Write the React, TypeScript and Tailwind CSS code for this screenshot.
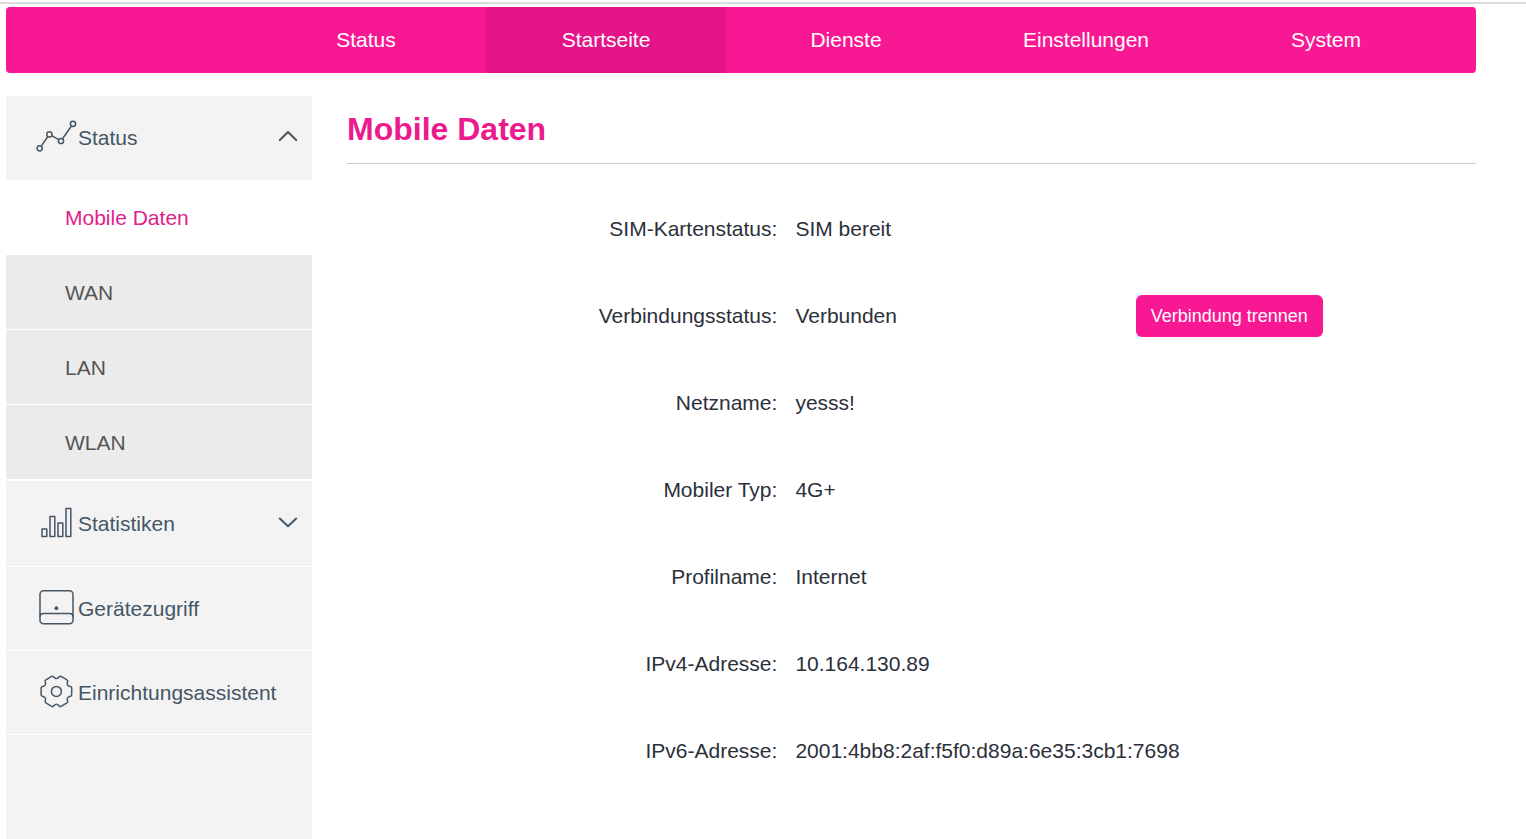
import clsx from "clsx";
import React, { useState } from "react";

const navItems = ["Status", "Startseite", "Dienste", "Einstellungen", "System"];

const statusPages = ["Mobile Daten", "WAN", "LAN", "WLAN"];

const details = [
  { label: "SIM-Kartenstatus:", value: "SIM bereit" },
  { label: "Verbindungsstatus:", value: "Verbunden", action: "Verbindung trennen" },
  { label: "Netzname:", value: "yesss!" },
  { label: "Mobiler Typ:", value: "4G+" },
  { label: "Profilname:", value: "Internet" },
  { label: "IPv4-Adresse:", value: "10.164.130.89" },
  { label: "IPv6-Adresse:", value: "2001:4bb8:2af:f5f0:d89a:6e35:3cb1:7698" },
];

const Icon: React.FC<{ children: React.ReactNode }> = ({ children }) => (
  <svg
    className="w-[41px] h-[41px] shrink-0"
    viewBox="0 0 41 41"
    fill="none"
    stroke="currentColor"
    strokeWidth="1.5"
    strokeLinejoin="round"
    aria-hidden="true"
  >
    {children}
  </svg>
);

const StatusIcon = () => (
  <Icon>
    <circle cx="3.7" cy="31.3" r="2.6" />
    <circle cx="13.4" cy="17.4" r="2.6" />
    <circle cx="25" cy="24" r="2.6" />
    <circle cx="37" cy="6.8" r="2.6" />
    <path d="M5.2 29.1l6.7-9.6M15.7 18.7l7 4M26.5 21.8L35.5 9" />
  </Icon>
);

const StatsIcon = () => (
  <Icon>
    <rect x="6" y="26" width="4.8" height="7.5" />
    <rect x="14" y="13.5" width="4.8" height="20" />
    <rect x="22" y="20" width="4.8" height="13.5" />
    <rect x="30" y="5.5" width="4.8" height="28" />
  </Icon>
);

const DeviceIcon = () => (
  <Icon>
    <rect x="4" y="2.7" width="33" height="33" rx="3.5" />
    <path d="M4 28.8Q4 25.4 7.4 25.4H33.6Q37 25.4 37 28.8" />
    <circle cx="20.4" cy="20.2" r="1.9" fill="currentColor" stroke="none" />
  </Icon>
);

const GearIcon = () => (
  <Icon>
    <g transform="translate(20.4 19.4)">
      <circle r="5" />
      {[0, 60, 120, 180, 240, 300].map((angle) => (
        <path
          key={angle}
          transform={`rotate(${angle})`}
          d="M11.1-6.4C11.8-5.2 12.6-5.2 14-4.9Q15.3-4.6 15.3-3.4V3.4Q15.3 4.6 14 4.9C12.6 5.2 11.8 5.2 11.1 6.4"
        />
      ))}
    </g>
  </Icon>
);

const Chevron: React.FC<{ open: boolean }> = ({ open }) => (
  <svg
    className="w-5 h-[21px] ml-auto"
    viewBox="0 0 20 21"
    fill="none"
    stroke="currentColor"
    strokeWidth="2"
    strokeLinecap="round"
    strokeLinejoin="round"
    aria-hidden="true"
  >
    <path d={open ? "M1.8 13L10 5L18.2 13" : "M1.8 5.5L10 13.3L18.2 5.5"} />
  </svg>
);

const sectionRow = "flex w-full items-center gap-px border-b pl-[30px] pr-[14px] cursor-pointer";

const Sidebar: React.FC = () => {
  const [statusOpen, setStatusOpen] = useState(true);
  const [statsOpen, setStatsOpen] = useState(false);

  return (
    <aside className="w-[306px] shrink-0 bg-[#f3f3f3] text-[#465664]">
      <button
        type="button"
        aria-expanded={statusOpen}
        onClick={() => setStatusOpen(!statusOpen)}
        className={clsx(sectionRow, "h-[84px] border-[#f3f3f3]")}
      >
        <StatusIcon />
        Status
        <Chevron open={statusOpen} />
      </button>
      {statusOpen && (
        <ul className="border-b border-white">
          {statusPages.map((page, i) => (
            <li key={page}>
              <a
                href="#"
                className={clsx(
                  "flex h-[75px] items-center border-b border-white pt-0.5 pl-[59px]",
                  i === 0 ? "bg-white text-[#e0218a]" : "bg-[#ebebeb] text-[#555555]"
                )}
              >
                {page}
              </a>
            </li>
          ))}
        </ul>
      )}
      <button
        type="button"
        aria-expanded={statsOpen}
        onClick={() => setStatsOpen(!statsOpen)}
        className={clsx(sectionRow, "h-[86px] border-white")}
      >
        <StatsIcon />
        Statistiken
        <Chevron open={statsOpen} />
      </button>
      <a href="#" className={clsx(sectionRow, "h-[84px] border-white")}>
        <DeviceIcon />
        Gerätezugriff
      </a>
      <a href="#" className={clsx(sectionRow, "h-[84px] border-white")}>
        <GearIcon />
        Einrichtungsassistent
      </a>
    </aside>
  );
};

const MobileData: React.FC = () => (
  <main className="flex-1 min-w-0 pl-[35px]">
    <h1 className="border-b border-[#cccccc] text-[32px] leading-[67px] font-bold text-[#ec1b8d]">
      Mobile Daten
    </h1>
    <dl className="mt-[21px] text-[#2b303a]">
      {details.map(({ label, value, action }) => (
        <div
          key={label}
          className="grid h-[87px] grid-cols-[minmax(0,430fr)_minmax(0,340fr)_minmax(0,358fr)] items-center"
        >
          <dt className="text-right">{label}</dt>
          <dd className="pl-[18px] whitespace-nowrap">{value}</dd>
          {action && (
            <dd className="pl-[18px] pt-px">
              <button
                type="button"
                className="block h-[42px] rounded-md bg-[#f91894] px-[15px] text-lg text-white cursor-pointer"
              >
                {action}
              </button>
            </dd>
          )}
        </div>
      ))}
    </dl>
  </main>
);

export default function App() {
  return (
    <div className="min-h-screen flex flex-col bg-white pt-[2px] font-['Liberation_Sans',Arial,sans-serif] text-[21px] leading-6">
      <div className="h-[2px] bg-[#dcdcdc]" />
      <div className="flex flex-1 flex-col pt-[3px] pl-[6px] pr-[50px]">
        <nav className="flex h-[66px] rounded bg-[#f91894] pl-[240px] pr-[30px] text-white">
          {navItems.map((item) => (
            <a
              key={item}
              href="#"
              className={clsx(
                "flex flex-1 items-center justify-center",
                item === "Startseite" && "bg-[#e51488]"
              )}
            >
              {item}
            </a>
          ))}
        </nav>
        <div className="mt-[23px] flex flex-1">
          <Sidebar />
          <MobileData />
        </div>
      </div>
    </div>
  );
}
